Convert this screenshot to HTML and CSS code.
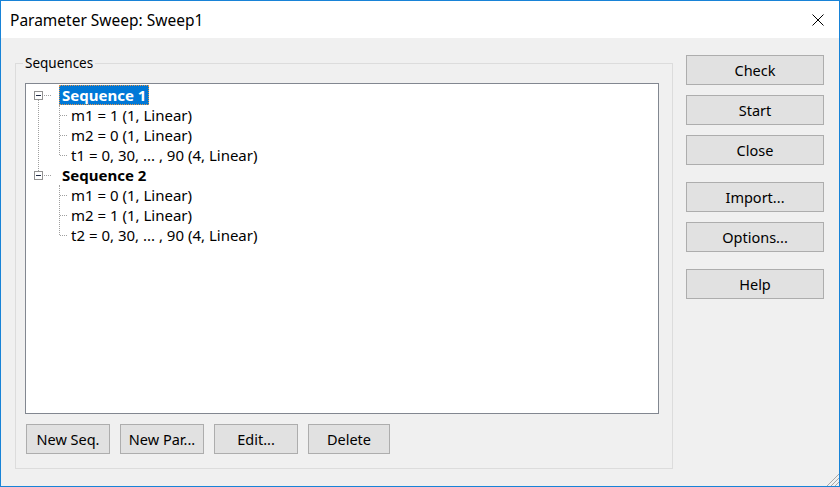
FILE: index.html
```html
<!DOCTYPE html>
<html lang="en">
<head>
  <meta charset="UTF-8">
  <title>Parameter Sweep: Sweep1</title>
  <link rel="stylesheet" href="styles.css">
</head>
<body>

<div class="window">
  <div class="titlebar">
    <span class="title">Parameter Sweep: Sweep1</span>
    <svg class="close" width="12" height="12" viewBox="0 0 12 12">
      <path d="M0.5 0.5 L11.5 11.5 M11.5 0.5 L0.5 11.5" stroke="#000" stroke-width="1" fill="none"/>
    </svg>
  </div>

  <div class="client">
    <div class="group">
      <span class="group-label">Sequences</span>

      <ul class="tree">
        <li class="node">
          <div class="row"><span class="toggle"></span><span class="label selected">Sequence 1</span></div>
          <ul class="children">
            <li class="leaf"><span class="label">m1 = 1 (1, Linear)</span></li>
            <li class="leaf"><span class="label">m2 = 0 (1, Linear)</span></li>
            <li class="leaf"><span class="label">t1 = 0, 30, ... , 90 (4, Linear)</span></li>
          </ul>
        </li>
        <li class="node">
          <div class="row"><span class="toggle"></span><span class="label">Sequence 2</span></div>
          <ul class="children">
            <li class="leaf"><span class="label">m1 = 0 (1, Linear)</span></li>
            <li class="leaf"><span class="label">m2 = 1 (1, Linear)</span></li>
            <li class="leaf"><span class="label">t2 = 0, 30, ... , 90 (4, Linear)</span></li>
          </ul>
        </li>
      </ul>

      <div class="actions">
        <button class="btn">New Seq.</button>
        <button class="btn">New Par...</button>
        <button class="btn">Edit...</button>
        <button class="btn narrow">Delete</button>
      </div>
    </div>

    <div class="side">
      <button class="btn">Check</button>
      <button class="btn">Start</button>
      <button class="btn">Close</button>
      <button class="btn spaced">Import...</button>
      <button class="btn">Options...</button>
      <button class="btn spaced">Help</button>
    </div>
  </div>

  <svg class="grip" width="15" height="15" viewBox="0 0 15 15">
    <path d="M15 3 L3 15 M15 7 L7 15 M15 11 L11 15" stroke="#a8a8a8" stroke-width="1" fill="none"/>
  </svg>
</div>

</body>
</html>
```

FILE: styles.css
```css
body {
  margin: 0;
  font-family: "Noto Sans", "Open Sans", sans-serif;
  color: #000;
  background: #fff;
}

.window {
  position: relative;
  width: 840px;
  height: 487px;
  box-sizing: border-box;
  border: 1px solid #1883d7;
  background: #f0f0f0;
  display: flex;
  flex-direction: column;
}

.titlebar {
  height: 37px;
  flex: none;
  background: #fff;
  display: flex;
  align-items: center;
  padding-left: 9px;
  padding-right: 15px;
}

.title {
  font-size: 15.5px;
}

.close {
  margin-left: auto;
}

.client {
  flex: 1;
  display: flex;
  gap: 13px;
  padding: 0 15px 17px 14px;
}

.group {
  position: relative;
  width: 658px;
  box-sizing: border-box;
  margin-top: 25px;
  border: 1px solid #dcdcdc;
  padding: 19px 13px 14px 9px;
  display: flex;
  flex-direction: column;
}

.group-label {
  position: absolute;
  top: -11px;
  left: 7px;
  padding: 0 2px;
  background: #f0f0f0;
  font-size: 13.5px;
  line-height: 20px;
}

/* tree view */
.tree {
  position: relative;
  height: 331px;
  box-sizing: border-box;
  margin: 0;
  padding: 1px 0 0 0;
  list-style: none;
  background: #fff;
  border: 1px solid #828790;
  font-size: 15px;
}

.tree::before {
  content: "";
  position: absolute;
  left: 12px;
  top: 11px;
  height: 80px;
  border-left: 1px dotted #a0a0a0;
}

.node {
  position: relative;
}

.row {
  height: 20px;
  display: flex;
  align-items: center;
}

.toggle {
  position: relative;
  width: 9px;
  height: 9px;
  box-sizing: border-box;
  margin-left: 8px;
  border: 1px solid #919191;
  background: #fff;
  z-index: 1;
}

.toggle::before {
  content: "";
  position: absolute;
  left: 1px;
  top: 3px;
  width: 5px;
  height: 1px;
  background: #1f2a44;
}

.toggle::after {
  content: "";
  position: absolute;
  left: 9px;
  top: 3px;
  width: 7px;
  border-top: 1px dotted #a0a0a0;
}

.row .label {
  margin-left: 16px;
  font-weight: bold;
}

.label {
  box-sizing: border-box;
  height: 20px;
  line-height: 18px;
  padding: 0 2px;
  border: 1px solid transparent;
  white-space: nowrap;
}

.label.selected {
  background: #0078d7;
  color: #fff;
  border: 1px dotted #e0954a;
}

.children {
  position: relative;
  margin: 0;
  padding: 0;
  list-style: none;
}

.children::before {
  content: "";
  position: absolute;
  left: 33px;
  top: 0;
  bottom: 10px;
  border-left: 1px dotted #a0a0a0;
}

.leaf {
  position: relative;
  height: 20px;
  display: flex;
  align-items: center;
  padding-left: 42px;
}

.leaf::before {
  content: "";
  position: absolute;
  left: 34px;
  top: 10px;
  width: 7px;
  border-top: 1px dotted #a0a0a0;
}

/* buttons */
.btn {
  height: 30px;
  box-sizing: border-box;
  border: 1px solid #adadad;
  background: #e1e1e1;
  font-family: "Noto Sans", "Open Sans", sans-serif;
  font-size: 14.5px;
  color: #000;
  padding: 0;
}

.actions {
  display: flex;
  gap: 10px;
  margin-top: 10px;
  padding-left: 1px;
}

.actions .btn {
  width: 84px;
}

.actions .btn.narrow {
  width: 82px;
}

.side {
  width: 138px;
  display: flex;
  flex-direction: column;
  gap: 10px;
  padding-top: 17px;
}

.side .spaced {
  margin-top: 7px;
}

.grip {
  position: absolute;
  right: 0;
  bottom: 0;
}
```
